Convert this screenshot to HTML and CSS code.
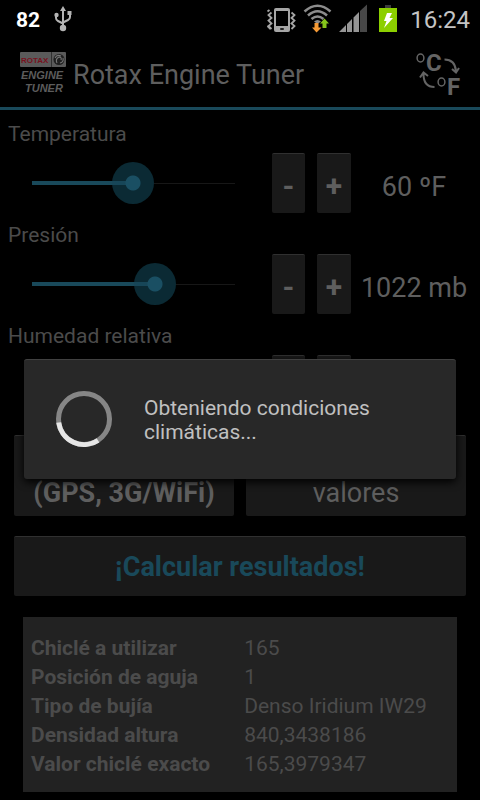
FILE: index.html
```html
<!DOCTYPE html>
<html lang="es">
<head>
<meta charset="utf-8">
<meta name="viewport" content="width=device-width, initial-scale=1">
<title>Rotax Engine Tuner</title>
<link rel="stylesheet" href="styles.css">
</head>
<body>
<div class="status">
  <span class="battery-level">82</span>
  <svg class="usb" width="20" height="28" viewBox="0 0 20 28" fill="none" stroke="#b4b4b4" stroke-width="2">
    <path d="M10 5V23M3 10V13Q3 15 5 16L10 18.500M17 9V12Q17 14 15 15L10 17.500"/>
    <path d="M10 1l3 5H7z" fill="#b4b4b4" stroke="none"/>
    <circle cx="10" cy="23" r="3.200" fill="#b4b4b4" stroke="none"/>
    <circle cx="3.500" cy="10" r="2.200" fill="#b4b4b4" stroke="none"/>
    <path d="M14.500 6h4v4h-4z" fill="#b4b4b4" stroke="none"/>
  </svg>
  <svg class="indicators" width="132" height="32" viewBox="266 3 132 32">
    <g fill="none" stroke="#a6a6a6" stroke-width="1.800">
      <path d="M271.500 12.500l-3 2.500 3 3-3 2.500 3 3-3 2.500 3 3"/>
      <path d="M267.500 11.500l2-1.500M267.500 26l3 3"/>
      <path d="M291.500 12.500l3 2.500-3 3 3 2.500-3 3 3 2.500-3 3"/>
    </g>
    <rect x="274" y="8" width="16" height="24" rx="2" fill="#a6a6a6"/>
    <rect x="276" y="11" width="12" height="15" fill="#000"/>
    <rect x="280" y="28" width="4" height="2" rx="1" fill="#222"/>
    <g fill="none" stroke="#8c8c8c" stroke-width="2.600">
      <path d="M304.500 11.500Q317.500 0 330.500 11.500"/>
      <path d="M308 15.500Q317.500 7 327 15.500"/>
      <path d="M311.500 19Q317.500 14 323.500 19"/>
    </g>
    <path d="M314 21.500Q317.500 18.500 321 21.500L317.500 24z" fill="#8c8c8c"/>
    <path d="M314.500 23h4v4.500h3L316.500 32.500 312 27.500h2.500z" fill="#f69a35"/>
    <path d="M322.500 28h4v-4.500h2.500L324.500 18.500 320 23.500h2.500z" fill="#85c41b"/>
    <path d="M339 32L346 25V32zM347 24l5-5V32h-5zM353.500 17.500l5.500-5.500V32h-5.500z" fill="#969696"/>
    <path d="M360 11l7-6.500V32h-7z" fill="#484848"/>
    <rect x="385" y="5" width="6" height="4" fill="#3c3c3c"/>
    <rect x="379" y="8" width="18" height="24" fill="#8ccf00"/>
    <path d="M387 13h5l-2.500 5h3.500L384 28l2.500-7H384z" fill="#fff"/>
  </svg>
  <time class="clock">16:24</time>
</div>

<header class="bar">
  <svg class="logo" width="48" height="44" viewBox="19 50 48 44" role="img" aria-label="Rotax Engine Tuner">
    <rect x="20" y="51" width="46" height="15" rx="1" fill="#5a5a5a"/>
    <text x="21" y="62" class="logo-brand">ROTAX</text>
    <path d="M51.500 51v15" stroke="#303030"/>
    <circle cx="59" cy="58.500" r="5.500" fill="#202020"/>
    <path d="M55 57q2-4 6-2M57 62q-2-4 2-6 3 0 2 3M60 62q4-1 3-5" fill="none" stroke="#777" stroke-width="1.100"/>
    <text x="21" y="78" class="logo-name">ENGINE</text>
    <text x="25" y="91" class="logo-name">TUNER</text>
  </svg>
  <h1 class="title">Rotax Engine Tuner</h1>
  <button class="units" aria-label="ºC / ºF">
    <svg width="48" height="60" viewBox="414 43 48 60">
      <g fill="none" stroke="#646464" stroke-width="2">
        <ellipse cx="420.500" cy="58" rx="3.400" ry="4" stroke-width="1.500"/>
        <ellipse cx="441.500" cy="82" rx="3.400" ry="4" stroke-width="1.500"/>
        <path d="M444.500 59.500Q455 59.500 456 71M452 69l4 3.500 3-4.500"/>
        <path d="M434.500 87Q423.500 87 423.500 74M420 77.500l3.500-5 4.500 3.500"/>
      </g>
      <text x="426" y="71" class="unit-letter">C</text>
      <text x="447" y="95" class="unit-letter">F</text>
    </svg>
  </button>
</header>

<main class="content">
  <section class="field">
    <label class="label" for="temp">Temperatura</label>
    <div class="controls">
      <input class="slider" id="temp" type="range" min="0" max="1000" value="498" style="--fill:0.498">
      <div class="steps">
        <button class="btn step">-</button>
        <button class="btn step">+</button>
      </div>
      <output class="value" for="temp">60 ºF</output>
    </div>
  </section>
  <section class="field">
    <label class="label" for="pres">Presión</label>
    <div class="controls">
      <input class="slider" id="pres" type="range" min="0" max="1000" value="606" style="--fill:0.606">
      <div class="steps">
        <button class="btn step">-</button>
        <button class="btn step">+</button>
      </div>
      <output class="value" for="pres">1022 mb</output>
    </div>
  </section>
  <section class="field">
    <label class="label" for="hum">Humedad relativa</label>
    <div class="controls">
      <input class="slider" id="hum" type="range" min="0" max="1000" value="500" style="--fill:0.5">
      <div class="steps">
        <button class="btn step" aria-label="-"></button>
        <button class="btn step" aria-label="+"></button>
      </div>
      <output class="value" for="hum"></output>
    </div>
  </section>

  <div class="actions">
    <button class="btn source strong">(GPS, 3G/WiFi)</button>
    <button class="btn source">valores</button>
    <button class="btn calculate">¡Calcular resultados!</button>
  </div>

  <table class="results">
    <tr><th scope="row">Chiclé a utilizar</th><td>165</td></tr>
    <tr><th scope="row">Posición de aguja</th><td>1</td></tr>
    <tr><th scope="row">Tipo de bujía</th><td>Denso Iridium IW29</td></tr>
    <tr><th scope="row">Densidad altura</th><td>840,3438186</td></tr>
    <tr><th scope="row">Valor chiclé exacto</th><td>165,3979347</td></tr>
  </table>
</main>

<div class="overlay">
  <div class="dialog" role="dialog" aria-labelledby="message">
    <svg class="spinner" width="60" height="60" viewBox="0 0 60 60" fill="none" stroke-width="5">
      <circle cx="30" cy="29" r="25.500" stroke="#868686"/>
      <path d="M4.700 32.500A25.500 25.500 0 0 0 44 50.300" stroke="#e6e6e6"/>
    </svg>
    <p class="message" id="message">Obteniendo condiciones climáticas...</p>
  </div>
</div>
</body>
</html>
```

FILE: styles.css
```css
* {
  box-sizing: border-box;
}

body {
  margin: 0;
  min-height: 100vh;
  position: relative;
  background: #000;
  color: #4b4b4b;
  font-family: Roboto, "Liberation Sans", sans-serif;
  font-size: 21px;
}

button {
  font: inherit;
  border: 0;
  padding: 0;
}

.status {
  display: flex;
  align-items: center;
  height: 38px;
  padding: 0 10px 0 16px;
}

.battery-level {
  padding-top: 2px;
  color: #fff;
  font-weight: 700;
}

.usb {
  margin-left: 13px;
}

.indicators {
  margin-left: auto;
}

.clock {
  margin-left: 12px;
  padding-top: 2px;
  color: #c4c4c4;
  font-size: 24px;
}

.bar {
  display: flex;
  align-items: center;
  height: 72px;
  padding: 0 18px 0 19px;
  border-bottom: 3px solid #19495a;
}

.logo-brand {
  fill: #79111d;
  font: 700 8px "Liberation Sans", sans-serif;
}

.logo-name {
  fill: #5c5c5c;
  font: italic 700 11px "Liberation Sans", sans-serif;
}

.title {
  flex: 1;
  margin: 0 0 0 6px;
  padding-top: 4px;
  color: #5e5e5e;
  font-size: 27px;
  font-weight: 400;
}

.units {
  display: flex;
  background: none;
}

.unit-letter {
  fill: #646464;
  font: 700 24px Roboto, sans-serif;
}

.content {
  padding-top: 10px;
}

.field {
  height: 101px;
}

.label {
  display: block;
  height: 28px;
  padding-left: 8px;
  line-height: 28px;
}

.controls {
  display: flex;
  align-items: center;
  height: 70px;
  padding: 0 3px 0 11px;
}

.slider {
  appearance: none;
  flex: 1;
  min-width: 0;
  height: 42px;
  margin: 0 16px 0 0;
  background: none;
}

.slider::-webkit-slider-runnable-track {
  height: 42px;
  background:
    linear-gradient(#19495a, #19495a) 21px 50% / calc((100% - 42px) * var(--fill)) 4px no-repeat,
    linear-gradient(#171717, #171717) 50% 50% / calc(100% - 42px) 1px no-repeat;
}

.slider::-webkit-slider-thumb {
  appearance: none;
  width: 42px;
  height: 42px;
  border-radius: 50%;
  background:
    radial-gradient(circle, #1a4f63 0 7px, transparent 8px),
    linear-gradient(#174658, #174658) 0 50% / 50% 4px no-repeat,
    #0b2a34;
}

.steps {
  display: grid;
  grid-template-columns: 33px 34px;
  gap: 12px;
}

.btn {
  border-top: 1px solid #303030;
  border-radius: 2px;
  background: #191919;
  color: #5e5e5e;
  font-size: 27px;
}

.step {
  height: 60px;
  padding-top: 4px;
  font-size: 30px;
  font-weight: 700;
}

.value {
  width: 126px;
  padding-top: 8px;
  color: #5e5e5e;
  font-size: 27px;
  text-align: center;
}

.actions {
  display: grid;
  grid-template-columns: 1fr 1fr;
  gap: 20px 12px;
  padding: 12px 14px 0;
}

.source {
  display: flex;
  align-items: flex-end;
  justify-content: center;
  height: 81px;
  padding-bottom: 7px;
}

.strong {
  font-weight: 700;
}

.calculate {
  grid-column: 1 / -1;
  height: 60px;
  color: #19495a;
  font-weight: 700;
}

.results {
  width: calc(100% - 46px);
  margin: 21px 23px 8px;
  padding: 17px 8px 13px;
  border-spacing: 0;
  background: #222;
  line-height: 29px;
}

.results th {
  width: 51%;
  padding: 0;
  text-align: left;
  font-weight: 700;
}

.results td {
  padding: 0;
}

.overlay {
  position: absolute;
  inset: 38px 0 0;
  display: flex;
  align-items: center;
  padding: 0 24px;
}

.dialog {
  display: flex;
  align-items: center;
  flex: 1;
  min-height: 120px;
  padding: 0 30px;
  border-top: 1px solid #414141;
  border-radius: 3px;
  background: #282828;
  box-shadow: 0 3px 8px #000;
}

.message {
  max-width: 260px;
  margin: 0 0 0 30px;
  color: #c0c0c0;
  font-size: 21px;
  line-height: 24px;
}
```
